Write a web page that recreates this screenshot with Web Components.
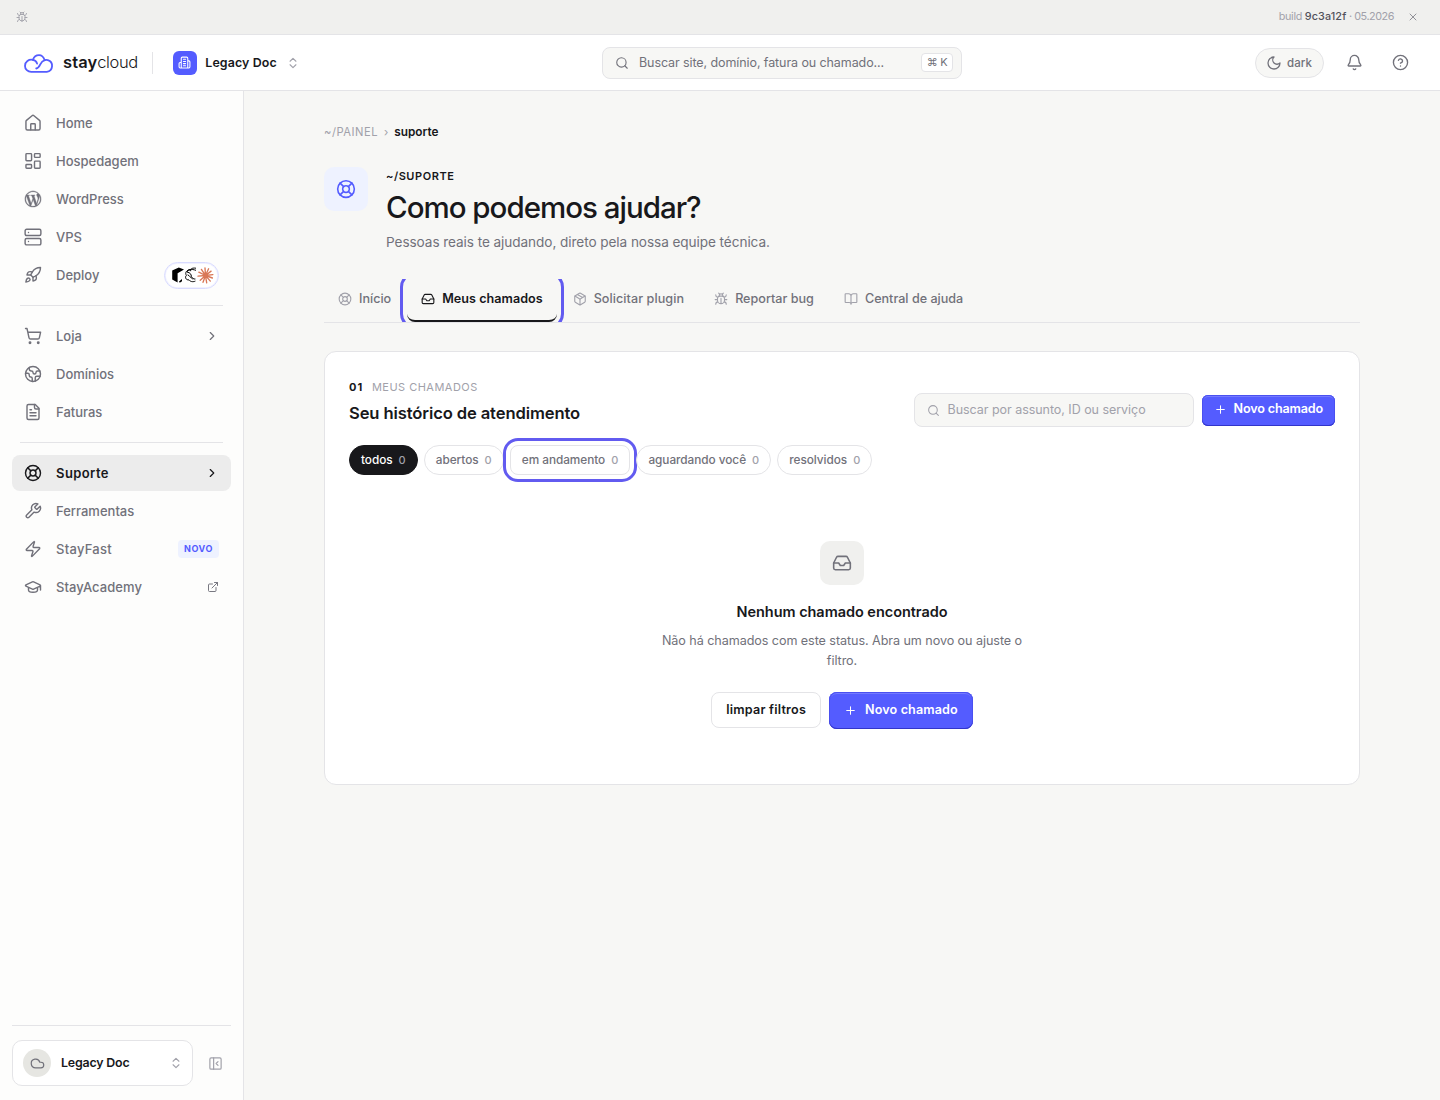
<!DOCTYPE html>
<html lang="pt-BR">
<head>
<meta charset="utf-8">
<title>Suporte · staycloud</title>
<style>
:root{
  --ink: #18181b;
  --muted: #71717a;
  --faint: #a1a1aa;
  --line: #e4e4e7;
  --canvas: #f7f7f5;
  --brand: #545cff;
  --ring: #625bf0;
}
html, body{ margin: 0; height: 100%; }
body{
  display: flex;
  flex-direction: column;
  overflow: hidden;
  background: var(--canvas);
  color: var(--ink);
  font: 400 13px/20px Inter, "Liberation Sans", sans-serif;
}
.shell{ display: flex; flex: 1; min-height: 0; }
main{ flex: 1; padding: 30px 80px 0; min-width: 0; }
</style>
</head>
<body>
<build-bar></build-bar>
<app-header></app-header>
<div class="shell">
  <side-nav></side-nav>
  <main>
    <bread-crumb></bread-crumb>
    <page-hero>
      <span slot="eyebrow">~/SUPORTE</span>
      <span slot="title">Como podemos ajudar?</span>
      <span slot="lead">Pessoas reais te ajudando, direto pela nossa equipe técnica.</span>
    </page-hero>
    <tab-bar>
      <tab-item icon="lifebuoy">Início</tab-item>
      <tab-item icon="inbox" active>Meus chamados</tab-item>
      <tab-item icon="package" style="letter-spacing:.07px">Solicitar plugin</tab-item>
      <tab-item icon="bug">Reportar bug</tab-item>
      <tab-item icon="book">Central de ajuda</tab-item>
    </tab-bar>
    <ticket-card></ticket-card>
  </main>
</div>

<script>
const icons = {
  house: '<path d="M15 21v-7a1 1 0 0 0-1-1h-4a1 1 0 0 0-1 1v7"/><path d="M2.6 10a2 2 0 0 1 .709-1.528l7.4-6.2a2 2 0 0 1 2.582 0l7.4 6.2A2 2 0 0 1 21.4 10v9.4a2 2 0 0 1-2 2H4.6a2 2 0 0 1-2-2z"/>',
  dashboard: '<rect width="7.5" height="9.5" x="2.6" y="2.2" rx="1"/><rect width="7.5" height="5" x="14" y="2.2" rx="1"/><rect width="7.5" height="9.5" x="14" y="12.2" rx="1"/><rect width="7.5" height="5" x="2.6" y="16.7" rx="1"/>',
  wordpress: '<path fill="currentColor" stroke="currentColor" stroke-width=".5" transform="translate(1.2 1.2) scale(.9)" d="M21.469 6.825c.84 1.537 1.318 3.3 1.318 5.175 0 3.979-2.156 7.456-5.363 9.325l3.295-9.527c.615-1.54.82-2.771.82-3.864 0-.405-.026-.78-.07-1.11m-7.981.105c.647-.03 1.232-.105 1.232-.105.582-.075.514-.93-.067-.899 0 0-1.755.135-2.88.135-1.064 0-2.85-.15-2.85-.15-.585-.03-.661.855-.075.885 0 0 .54.061 1.125.09l1.68 4.605-2.37 7.08L5.354 6.9c.649-.03 1.234-.1 1.234-.1.585-.075.516-.93-.065-.896 0 0-1.746.138-2.874.138-.2 0-.438-.008-.69-.015C4.911 3.15 8.235 1.215 12 1.215c2.809 0 5.365 1.072 7.286 2.833-.046-.003-.091-.009-.141-.009-1.06 0-1.812.923-1.812 1.914 0 .89.513 1.643 1.06 2.531.411.72.89 1.643.89 2.977 0 .915-.354 1.994-.821 3.479l-1.075 3.585-3.9-11.61.001.014zM12 22.784c-1.059 0-2.081-.153-3.048-.437l3.237-9.406 3.315 9.087c.024.053.05.101.078.149-1.12.393-2.325.609-3.582.609M1.211 12c0-1.564.336-3.05.935-4.39L7.29 21.709C3.694 19.96 1.212 16.271 1.211 12M12 0C5.385 0 0 5.385 0 12s5.385 12 12 12 12-5.385 12-12S18.615 0 12 0"/>',
  server: '<rect width="21" height="8.5" x="1.5" y="1.6" rx="2"/><rect width="21" height="8.5" x="1.5" y="14" rx="2"/><path d="M6 6h.01M6 18h.01"/>',
  rocket: '<path d="M4.5 16.5c-1.5 1.26-2 5-2 5s3.74-.5 5-2c.71-.84.7-2.13-.09-2.91a2.18 2.18 0 0 0-2.91-.09z"/><path d="m12 15-3-3a22 22 0 0 1 2-3.95A12.88 12.88 0 0 1 22 2c0 2.72-.78 7.5-6 11a22.35 22.35 0 0 1-4 2z"/><path d="M9 12H4s.55-3.03 2-4c1.62-1.08 5 0 5 0M12 15v5s3.03-.55 4-2c1.08-1.62 0-5 0-5"/>',
  cart: '<circle cx="8" cy="21" r="1"/><circle cx="19" cy="21" r="1"/><path d="M2.05 2.05h2l2.66 12.42a2 2 0 0 0 2 1.58h9.78a2 2 0 0 0 1.95-1.57l1.65-7.43H5.12"/>',
  earth: '<path d="M21.54 15H17a2 2 0 0 0-2 2v4.54M7 3.34V5a3 3 0 0 0 3 3 2 2 0 0 1 2 2c0 1.1.9 2 2 2a2 2 0 0 0 2-2c0-1.1.9-2 2-2h3.17M11 21.95V18a2 2 0 0 0-2-2 2 2 0 0 1-2-2v-1a2 2 0 0 0-2-2H2.05"/><circle cx="12" cy="12" r="10"/>',
  file: '<path d="M15 2H6a2 2 0 0 0-2 2v16a2 2 0 0 0 2 2h12a2 2 0 0 0 2-2V7Z"/><path d="M14 2v4a2 2 0 0 0 2 2h4M10 9H8M16 13H8M16 17H8"/>',
  lifebuoy: '<circle cx="12" cy="12" r="10"/><path d="m4.93 4.93 4.24 4.24M14.83 9.17l4.24-4.24M14.83 14.83l4.24 4.24M9.17 14.83l-4.24 4.24"/><circle cx="12" cy="12" r="4"/>',
  wrench: '<path d="M14.7 6.3a1 1 0 0 0 0 1.4l1.6 1.6a1 1 0 0 0 1.4 0l3.77-3.77a6 6 0 0 1-7.94 7.94l-6.91 6.91a2.12 2.12 0 0 1-3-3l6.91-6.91a6 6 0 0 1 7.94-7.94l-3.76 3.76z"/>',
  zap: '<path d="M4 14a1 1 0 0 1-.78-1.63l9.9-10.2a.5.5 0 0 1 .86.46l-1.92 6.02A1 1 0 0 0 13 10h7a1 1 0 0 1 .78 1.63l-9.9 10.2a.5.5 0 0 1-.86-.46l1.92-6.02A1 1 0 0 0 11 14z"/>',
  cap: '<path d="M21.42 10.922a1 1 0 0 0-.019-1.838L12.83 5.18a2 2 0 0 0-1.66 0L2.6 9.08a1 1 0 0 0 0 1.832l8.57 3.908a2 2 0 0 0 1.66 0zM22 10v6M6 12.5V16a6 3 0 0 0 12 0v-3.5"/>',
  external: '<path d="M15 3h6v6M10 14 21 3M18 13v6a2 2 0 0 1-2 2H5a2 2 0 0 1-2-2V8a2 2 0 0 1 2-2h6"/>',
  bug: '<path d="m8 2 1.88 1.88M14.12 3.88 16 2M9 7.13v-1a3.003 3.003 0 1 1 6 0v1"/><path d="M12 20c-3.3 0-6-2.7-6-6v-3a4 4 0 0 1 4-4h4a4 4 0 0 1 4 4v3c0 3.3-2.7 6-6 6M12 20v-9M6.53 9C4.6 8.8 3 7.1 3 5M6 13H2M3 21c0-2.1 1.7-3.9 3.8-4M20.97 5c0 2.1-1.6 3.8-3.5 4M22 13h-4M17.2 17c2.1.1 3.8 1.9 3.8 4"/>',
  building: '<path d="M6 22V4a2 2 0 0 1 2-2h8a2 2 0 0 1 2 2v18ZM6 12H4a2 2 0 0 0-2 2v6a2 2 0 0 0 2 2h2M18 9h2a2 2 0 0 1 2 2v9a2 2 0 0 1-2 2h-2M10 6h4M10 10h4M10 14h4M10 18h4"/>',
  inbox: '<path d="M22 12h-6l-2 3h-4l-2-3H2"/><path d="M5.45 5.11 2 12v6a2 2 0 0 0 2 2h16a2 2 0 0 0 2-2v-6l-3.45-6.89A2 2 0 0 0 16.76 4H7.24a2 2 0 0 0-1.79 1.11z"/>',
  package: '<path d="M11 21.73a2 2 0 0 0 2 0l7-4A2 2 0 0 0 21 16V8a2 2 0 0 0-1-1.73l-7-4a2 2 0 0 0-2 0l-7 4A2 2 0 0 0 3 8v8a2 2 0 0 0 1 1.73zM12 22V12"/><path d="m3.3 7 7.703 4.734a2 2 0 0 0 1.994 0L20.7 7M7.5 4.27l9 5.15"/>',
  book: '<path d="M12 7v14M3 18a1 1 0 0 1-1-1V4a1 1 0 0 1 1-1h5a4 4 0 0 1 4 4 4 4 0 0 1 4-4h5a1 1 0 0 1 1 1v13a1 1 0 0 1-1 1h-6a3 3 0 0 0-3 3 3 3 0 0 0-3-3z"/>',
  search: '<circle cx="11" cy="11" r="8"/><path d="m21 21-4.3-4.3"/>',
  moon: '<path d="M12 3a6 6 0 0 0 9 9 9 9 0 1 1-9-9Z"/>',
  bell: '<path d="M10.268 21a2 2 0 0 0 3.464 0M3.262 15.326A1 1 0 0 0 4 17h16a1 1 0 0 0 .74-1.673C19.41 13.956 18 12.499 18 8A6 6 0 0 0 6 8c0 4.499-1.411 5.956-2.738 7.326"/>',
  help: '<circle cx="12" cy="12" r="10"/><path d="M9.09 9a3 3 0 0 1 5.83 1c0 2-3 3-3 3M12 17h.01"/>',
  cloud: '<path d="M17.5 19H9a7 7 0 1 1 6.71-9h1.79a4.5 4.5 0 1 1 0 9Z"/>',
  panel: '<rect width="18" height="18" x="3" y="3" rx="2"/><path d="M9 3v18M16 15l-3-3 3-3"/>',
  plus: '<path d="M5 12h14M12 5v14"/>',
  close: '<path d="M18 6 6 18M6 6l12 12"/>',
  right: '<path d="m9 18 6-6-6-6"/>',
  updown: '<path d="m7 15 5 5 5-5M7 9l5-5 5 5"/>'
};

function render(host, css, html) {
  const template = document.createElement('template');
  template.innerHTML = `<style>${css}</style>${html}`;
  host.attachShadow({ mode: 'open' }).appendChild(template.content.cloneNode(true));
}

class UiIcon extends HTMLElement {
  connectedCallback() {
    if (this.shadowRoot) return;
    const size = this.getAttribute('size') || 18;
    const stroke = this.getAttribute('stroke') || 1.9;
    render(this, `
      :host{ display: inline-flex; flex: none; }
      svg{ display: block; }
    `, `<svg width="${size}" height="${size}" viewBox="0 0 24 24" fill="none" stroke="currentColor" stroke-width="${stroke}" stroke-linecap="round" stroke-linejoin="round">${icons[this.getAttribute('name')]}</svg>`);
  }
}

class BuildBar extends HTMLElement {
  constructor() {
    super();
    render(this, `
      :host{
        display: flex; align-items: center; flex: none; box-sizing: border-box; height: 35px;
        padding: 0 21px 2px 16px; background: #f0f0ee; border-bottom: 1px solid var(--line);
        color: var(--faint); font-size: 10.8px; letter-spacing: -.3px;
      }
      p{ margin: 0 13px 0 auto; padding-top: 1px; white-space: pre; }
      b{ color: #52525b; font-weight: 500; letter-spacing: .12px; }
      .x{ color: var(--muted); }
      ui-icon{ padding-top: 1px; }
    `, `
      <ui-icon name="bug" size="12"></ui-icon>
      <p>build <b>9c3a12f</b><span style="letter-spacing:-.44px"> · 05.2026</span></p>
      <ui-icon class="x" name="close" size="12" stroke="1.5"></ui-icon>
    `);
  }
}

class BrandLogo extends HTMLElement {
  constructor() {
    super();
    render(this, `
      :host{ display: flex; align-items: center; gap: 9px; font-size: 16.5px; line-height: 24px; }
      span{ padding-bottom: 1px; }
      b{ font-weight: 600; letter-spacing: .1px; }
      i{ font-style: normal; font-weight: 300; letter-spacing: -.4px; }
      svg{ display: block; margin-top: 1px; }
    `, `
      <svg width="30" height="19" viewBox="0 0 30 19" fill="none" stroke="#545cff" stroke-width="1.8" stroke-linecap="round">
        <path d="M7.2 17.8H22.8A6 6 0 0 0 23.8 6.1C22.5 5.8 21.6 5.9 20.7 6.2C19.6 3 17.5 1.2 15 1.2C12.3 1.2 10 2.7 8.9 5.9C4.8 5 1 7.8 1 11.9C1 15.3 3.8 17.8 7.2 17.8Z"/>
        <path d="M8.9 5.9C11.2 6.4 12.6 7.6 13.1 9.6M20.7 6.2C18.4 6.9 17.4 8.1 16.3 10.4C15.2 12.6 14.4 14.2 12.2 14.5"/>
      </svg>
      <span><b>stay</b><i>cloud</i></span>
    `);
  }
}

class AppHeader extends HTMLElement {
  constructor() {
    super();
    render(this, `
      :host{
        display: grid; grid-template-columns: 578px 360px 1fr; align-items: center; flex: none;
        box-sizing: border-box; height: 56px; padding: 0 24px;
        background: #fff; border-bottom: 1px solid var(--line);
      }
      .left, .right{ display: flex; align-items: center; }
      .rule{ width: 1px; height: 22px; margin: 0 20px 0 14px; background: var(--line); }
      .site{ display: grid; place-items: center; width: 24px; height: 24px; border-radius: 6px; background: var(--brand); color: #fff; }
      .name{ margin: 0 9.5px 0 8.5px; font-size: 12.4px; font-weight: 600; letter-spacing: .12px; }
      .left > ui-icon{ color: var(--faint); }
      .search{
        display: flex; align-items: center; box-sizing: border-box; height: 32px; padding: 0 8px 0 12px;
        border: 1px solid var(--line); border-radius: 8px; background: var(--canvas);
        color: var(--muted); font-size: 12.5px; letter-spacing: -.09px;
      }
      .search ui-icon{ margin-right: 10px; }
      kbd{
        margin-left: auto; box-sizing: border-box; width: 32px; height: 19px; text-align: center;
        font: 400 11px/17px Inter, sans-serif; letter-spacing: -.4px;
        border: 1px solid var(--line); border-radius: 4px; background: #fff;
      }
      .right{ justify-content: flex-end; gap: 22px; color: var(--muted); padding-right: 7px; }
      .theme{
        display: flex; align-items: center; gap: 5px; box-sizing: border-box; height: 30px; padding: 0 11px 0 10px;
        border: 1px solid var(--line); border-radius: 15px; background: var(--canvas);
        font-size: 11.5px; font-weight: 500; letter-spacing: .05px;
      }
      .bell{ margin: 0 7px 0 0; }
    `, `
      <div class="left">
        <brand-logo></brand-logo>
        <span class="rule"></span>
        <span class="site"><ui-icon name="building" size="13" stroke="2"></ui-icon></span>
        <span class="name">Legacy Doc</span>
        <ui-icon name="updown" size="14"></ui-icon>
      </div>
      <div class="search"><ui-icon name="search" size="14"></ui-icon>Buscar site, domínio, fatura ou chamado...<kbd>⌘ K</kbd></div>
      <div class="right">
        <span class="theme"><ui-icon name="moon" size="16"></ui-icon>dark</span>
        <ui-icon class="bell" name="bell" size="17"></ui-icon>
        <ui-icon name="help" size="17"></ui-icon>
      </div>
    `);
  }
}

class NavItem extends HTMLElement {
  connectedCallback() {
    if (this.shadowRoot) return;
    render(this, `
      :host{
        display: flex; align-items: center; box-sizing: border-box; height: 36px; padding: 0 12px;
        border-radius: 8px; color: var(--muted); font-weight: 500;
      }
      :host([active]){ background: #ececec; color: var(--ink); font-weight: 600; letter-spacing: .42px; }
      .label{ margin: 0 auto 1px 14px; }
      .end{ display: flex; letter-spacing: 0; }
    `, `
      <ui-icon name="${this.getAttribute('icon')}" size="18"></ui-icon>
      <span class="label"><slot></slot></span>
      <span class="end"><slot name="end"></slot></span>
    `);
  }
}

// stacked marks of the tools a deploy can start from
class DeployBadge extends HTMLElement {
  constructor() {
    super();
    render(this, `
      :host{
        display: flex; align-items: center; box-sizing: border-box; width: 55px; height: 27px; padding: 0 4px 0 3px;
        border: 1px solid #d9dbff; border-radius: 14px; background: #fff; box-shadow: inset 0 0 0 1px #f0f1ff;
      }
      span{ display: grid; place-items: center; width: 19px; height: 19px; border-radius: 50%; background: #fff; flex: none; overflow: hidden; }
      span + span{ margin-left: -5px; }
      svg{ display: block; }
    `, `
      <span><svg width="16" height="16" viewBox="0 0 16 16"><path fill="#000" d="M2.2 3.6 8.8.4 14 2.4 7.6 6.2v9.4L2.2 12.6z"/><path fill="#000" d="m9 14.6 3-2.7v2.4l-2.2 1.4z"/></svg></span>
      <span><svg width="16" height="16" viewBox="0 0 16 16" fill="none" stroke="#000" stroke-width="1"><path d="M12 1.2C7.5.6 6.4 2.2 6.7 4.2M12 3.3C7.8 2 3 1.7 3.2 5.2M6.7 3.2C2.2 2.6.8 6 2.4 8.4M3.2 5.2c3 .3 4 2.2 4.2 4.2M2.4 8.4C.5 10.2 2 13.3 5 12.9M3.6 7.8c2.7 1.2 3 3.1 5 4.2M5 12.9c2 2.4 4.6 1.9 6.4 1.2M7.4 9.4c.8 2 2.2 2.8 4 2.6"/></svg></span>
      <span><svg width="17" height="17" viewBox="0 0 17 17" stroke="#d97757" stroke-width="1.35" stroke-linecap="round"><path d="M8.5 8.5 8 1M8.5 8.5 11.6 1.8M8.5 8.5l5.6-4.4M8.5 8.5l7.4-.9M8.5 8.5l6.9 2.5M8.5 8.5l4.8 5.6M8.5 8.5l1.2 7.3M8.5 8.5 6 15.3M8.5 8.5l-5.3 4.8M8.5 8.5 1 9.1M8.5 8.5 1.8 5.2M8.5 8.5 4.4 2.4"/></svg></span>
    `);
  }
}

class AccountSwitch extends HTMLElement {
  constructor() {
    super();
    render(this, `
      :host{ display: flex; align-items: center; gap: 14.5px; padding-top: 14px; border-top: 1px solid var(--line); color: var(--faint); }
      .card{
        display: flex; align-items: center; box-sizing: border-box; width: 181px; height: 46px; padding: 0 9.5px 0 10px;
        border: 1px solid var(--line); border-radius: 10px; background: #fff;
      }
      .avatar{ display: grid; place-items: center; width: 28px; height: 28px; border-radius: 50%; background: #e6e6e2; color: var(--muted); }
      b{ margin: 0 auto 1px 10px; color: var(--ink); font-size: 12.4px; font-weight: 600; letter-spacing: -.19px; }
    `, `
      <div class="card">
        <span class="avatar"><ui-icon name="cloud" size="15"></ui-icon></span>
        <b>Legacy Doc</b>
        <ui-icon name="updown" size="14"></ui-icon>
      </div>
      <ui-icon name="panel" size="15"></ui-icon>
    `);
  }
}

class SideNav extends HTMLElement {
  constructor() {
    super();
    render(this, `
      :host{
        display: flex; flex-direction: column; flex: none; box-sizing: border-box; width: 244px; padding: 14px 12px;
        background: #fdfdfc; border-right: 1px solid var(--line);
      }
      nav{ display: flex; flex-direction: column; gap: 2px; margin-bottom: auto; }
      hr{ align-self: stretch; height: 1px; margin: 10px 8px; border: 0; background: var(--line); }
      .novo{
        padding: 0 6px; border-radius: 4px; background: #eef2ff; color: var(--brand);
        font: 700 9px/18px Inter, sans-serif; letter-spacing: .55px;
      }
    `, `
      <nav>
        <nav-item icon="house">Home</nav-item>
        <nav-item icon="dashboard">Hospedagem</nav-item>
        <nav-item icon="wordpress">WordPress</nav-item>
        <nav-item icon="server">VPS</nav-item>
        <nav-item icon="rocket">Deploy<deploy-badge slot="end"></deploy-badge></nav-item>
        <hr>
        <nav-item icon="cart">Loja<ui-icon slot="end" name="right" size="14" stroke="2"></ui-icon></nav-item>
        <nav-item icon="earth">Domínios</nav-item>
        <nav-item icon="file">Faturas</nav-item>
        <hr>
        <nav-item icon="lifebuoy" active>Suporte<ui-icon slot="end" name="right" size="14" stroke="2"></ui-icon></nav-item>
        <nav-item icon="wrench">Ferramentas</nav-item>
        <nav-item icon="zap" style="letter-spacing:.28px">StayFast<span slot="end" class="novo">NOVO</span></nav-item>
        <nav-item icon="cap" style="letter-spacing:.06px">StayAcademy<ui-icon slot="end" name="external" size="12"></ui-icon></nav-item>
      </nav>
      <account-switch></account-switch>
    `);
  }
}

class BreadCrumb extends HTMLElement {
  constructor() {
    super();
    render(this, `
      :host{ display: flex; gap: 6px; line-height: 22px; color: var(--faint); font-size: 11.2px; }
      .root{ letter-spacing: .5px; }
      b{ color: var(--ink); font-size: 11.8px; font-weight: 600; }
    `, `<span class="root">~/PAINEL</span><span>›</span><b>suporte</b>`);
  }
}

class PageHero extends HTMLElement {
  constructor() {
    super();
    render(this, `
      :host{ display: flex; gap: 18px; padding: 24px 0 28px; }
      .tile{ display: grid; place-items: center; width: 44px; height: 44px; border-radius: 10px; background: #eef2ff; color: var(--brand); }
      .text{ display: flex; flex-direction: column; }
      .eyebrow{ font: 600 11px/18px Inter, sans-serif; letter-spacing: .55px; }
      h1{ margin: 3px 0 7px; font-size: 29.5px; line-height: 38px; font-weight: 500; letter-spacing: -1px; }
      .lead{ height: 18px; color: var(--muted); font-size: 13.6px; line-height: 19px; letter-spacing: -.07px; }
    `, `
      <span class="tile"><ui-icon name="lifebuoy" size="20"></ui-icon></span>
      <div class="text">
        <slot name="eyebrow" class="eyebrow"></slot>
        <h1><slot name="title"></slot></h1>
        <span class="lead"><slot name="lead"></slot></span>
      </div>
    `);
  }
}

class TabBar extends HTMLElement {
  constructor() {
    super();
    render(this, `
      :host{ display: block; margin-bottom: 28px; border-bottom: 1px solid var(--line); }
      .strip{ display: flex; gap: 2px; height: 43px; overflow: hidden; }
    `, `<div class="strip"><slot></slot></div>`);
  }
}

class TabItem extends HTMLElement {
  connectedCallback() {
    if (this.shadowRoot) return;
    render(this, `
      :host{
        display: flex; align-items: center; gap: 7px; box-sizing: border-box; padding: 0 14px;
        height: 43px; border-bottom: 2px solid transparent;
        color: var(--muted); font-size: 12.6px; font-weight: 500; letter-spacing: 0; white-space: nowrap;
      }
      ui-icon{ color: var(--faint); padding-bottom: 1px; }
      :host([active]){
        color: var(--ink); font-weight: 600; letter-spacing: .02px; border-bottom-color: var(--ink); border-radius: 8px;
        outline: 3px solid var(--ring); outline-offset: 4px;
      }
      :host([active]) ui-icon{ color: var(--ink); }
      .t{ padding-bottom: 1px; }
    `, `<ui-icon name="${this.getAttribute('icon')}" size="14"></ui-icon><span class="t"><slot></slot></span>`);
  }
}

class FilterChip extends HTMLElement {
  connectedCallback() {
    if (this.shadowRoot) return;
    render(this, `
      :host{
        display: flex; gap: 6px; box-sizing: border-box; height: 30px; padding: 0 11px;
        border: 1px solid var(--line); border-radius: 15px; background: #fff; color: var(--muted);
        font-size: 11.8px; line-height: 28px; font-weight: 500; letter-spacing: -.04px;
      }
      :host([selected]){ background: var(--ink); border-color: var(--ink); color: #fff; }
      :host([focused]){ border-radius: 8px; outline: 3px solid var(--ring); outline-offset: 4px; }
      .n{ color: var(--faint); font-size: 11px; letter-spacing: .1px; }
    `, `<slot></slot><span class="n">0</span>`);
  }
}

class UiButton extends HTMLElement {
  connectedCallback() {
    if (this.shadowRoot) return;
    const icon = this.getAttribute('icon');
    render(this, `
      :host{
        display: flex; align-items: center; gap: 7px; box-sizing: border-box; height: 36px; padding: 0 14px 1px;
        border: 1px solid var(--line); border-radius: 8px; background: #fff;
        font-size: 12.6px; font-weight: 600; letter-spacing: .22px; white-space: nowrap;
      }
      :host([primary]){
        height: 37px; padding: 0 15px 2px; gap: 8px; border: 0; background: var(--brand); color: #fff; letter-spacing: .12px;
        box-shadow: inset 0 -1px #3235c9, inset 0 0 0 1px #4a50f0, inset 0 2px #747aff;
      }
      :host([small]){ height: 31px; padding: 0 12px 3px; gap: 7px; border-radius: 6px; letter-spacing: -.16px; }
      ui-icon{ padding-top: 1px; }
    `, `${icon ? `<ui-icon name="${icon}" size="13"></ui-icon>` : ''}<slot></slot>`);
  }
}

class TicketCard extends HTMLElement {
  constructor() {
    super();
    render(this, `
      :host{
        display: block; box-sizing: border-box; height: 434px; padding: 25px 24px;
        border: 1px solid var(--line); border-radius: 12px; background: #fff;
      }
      header{ display: flex; align-items: flex-end; height: 50px; }
      .heading{ flex: 1; align-self: flex-start; }
      .eyebrow{ display: flex; gap: 8.5px; color: var(--faint); font-size: 11px; line-height: 20px; letter-spacing: .48px; }
      .eyebrow b{ color: var(--ink); letter-spacing: 1.1px; }
      h2{ margin: 4px 0 0; font-size: 16.6px; line-height: 24px; font-weight: 600; letter-spacing: -.12px; }
      .search{
        display: flex; align-items: center; gap: 8px; box-sizing: border-box; width: 280px; height: 34px; margin: 0 8px 0 0; padding: 0 12px;
        border: 1px solid var(--line); border-radius: 8px; background: var(--canvas); color: var(--faint); font-size: 12.5px; letter-spacing: -.04px;
      }
      header ui-button{ margin-bottom: 1px; }
      .chips{ display: flex; gap: 6px; margin-top: 18px; }
      .empty{ display: flex; flex-direction: column; align-items: center; padding-top: 66px; text-align: center; }
      .tile{ display: grid; place-items: center; width: 44px; height: 44px; border-radius: 10px; background: #f0f0ee; color: var(--muted); }
      h3{ margin: 17px 0 9px; font-size: 14.5px; line-height: 20px; font-weight: 600; letter-spacing: -.04px; }
      p{ width: 370px; margin: 0 0 21px; color: var(--muted); font-size: 12.6px; letter-spacing: -.07px; }
      .actions{ display: flex; align-items: flex-start; gap: 8px; }
    `, `
      <header>
        <div class="heading">
          <div class="eyebrow"><b>01</b><span>MEUS CHAMADOS</span></div>
          <h2>Seu histórico de atendimento</h2>
        </div>
        <div class="search"><ui-icon name="search" size="13"></ui-icon>Buscar por assunto, ID ou serviço</div>
        <ui-button primary small icon="plus">Novo chamado</ui-button>
      </header>
      <div class="chips">
        <filter-chip selected>todos</filter-chip>
        <filter-chip>abertos</filter-chip>
        <filter-chip focused>em andamento</filter-chip>
        <filter-chip>aguardando você</filter-chip>
        <filter-chip>resolvidos</filter-chip>
      </div>
      <div class="empty">
        <span class="tile"><ui-icon name="inbox" size="20"></ui-icon></span>
        <h3>Nenhum chamado encontrado</h3>
        <p>Não há chamados com este status. Abra um novo ou ajuste o filtro.</p>
        <div class="actions">
          <ui-button>limpar filtros</ui-button>
          <ui-button primary icon="plus">Novo chamado</ui-button>
        </div>
      </div>
    `);
  }
}

customElements.define('ui-icon', UiIcon);
customElements.define('ui-button', UiButton);
customElements.define('build-bar', BuildBar);
customElements.define('brand-logo', BrandLogo);
customElements.define('app-header', AppHeader);
customElements.define('nav-item', NavItem);
customElements.define('deploy-badge', DeployBadge);
customElements.define('account-switch', AccountSwitch);
customElements.define('side-nav', SideNav);
customElements.define('bread-crumb', BreadCrumb);
customElements.define('page-hero', PageHero);
customElements.define('tab-item', TabItem);
customElements.define('tab-bar', TabBar);
customElements.define('filter-chip', FilterChip);
customElements.define('ticket-card', TicketCard);
</script>
</body>
</html>
